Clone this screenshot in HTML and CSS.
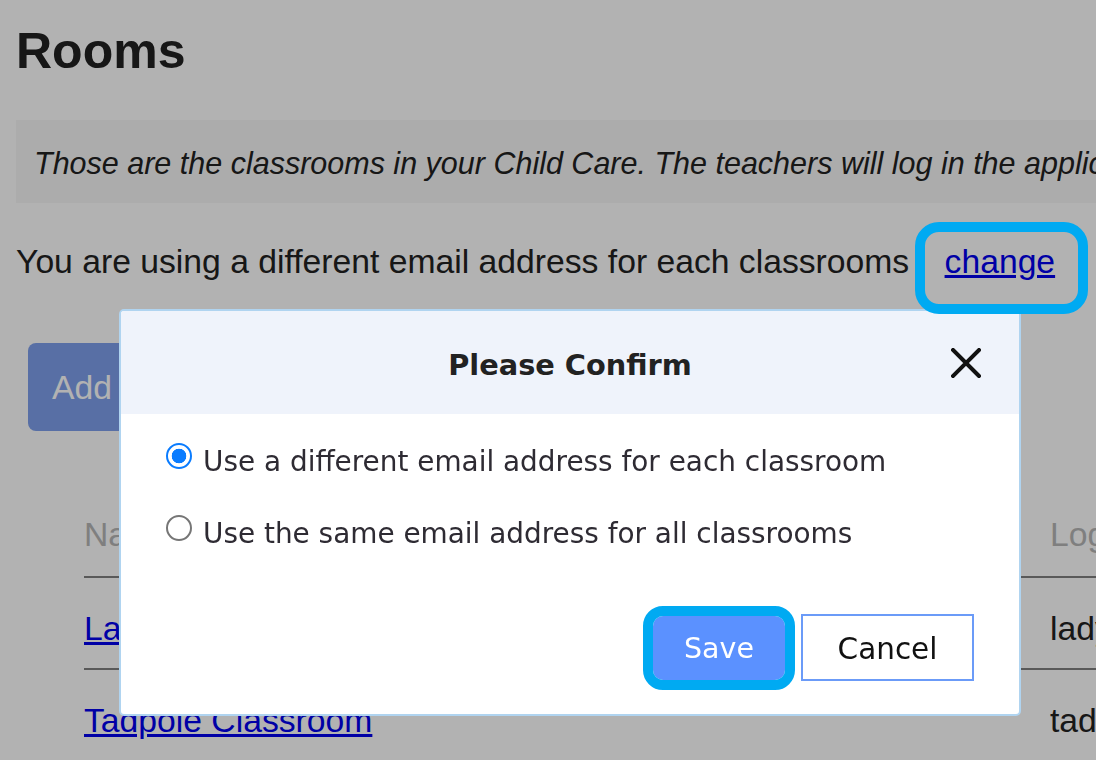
FILE: index.html
```html
<!DOCTYPE html>
<html lang="en">
<head>
<meta charset="utf-8">
<title>Rooms</title>
<link rel="stylesheet" href="styles.css">
</head>
<body>
<main class="page">
  <h1 class="title">Rooms</h1>
  <div class="info">Those are the classrooms in your Child Care. The teachers will log in the application using the email address of their classroom.</div>
  <p class="mode">You are using a different email address for each classrooms <a href="#" class="change">change</a></p>
  <button class="add">Add a Room</button>
  <div class="table">
    <div class="row head">
      <div class="cell">Name</div>
      <div class="cell">Login</div>
    </div>
    <div class="row">
      <div class="cell"><a href="#">Ladybug Classroom</a></div>
      <div class="cell">ladybug@childcare.com</div>
    </div>
    <div class="row last">
      <div class="cell"><a href="#">Tadpole Classroom</a></div>
      <div class="cell">tadpole@childcare.com</div>
    </div>
  </div>
</main>

<div class="overlay"></div>
<div class="ring ring-change"></div>

<div class="modal" role="dialog">
  <div class="modal-head">
    <h2 class="modal-title">Please Confirm</h2>
    <button class="close" aria-label="Close">
      <svg width="30" height="30" viewBox="0 0 30 30"><path d="M2 2 L28 28 M28 2 L2 28" stroke="#111" stroke-width="4" stroke-linecap="square" fill="none"/></svg>
    </button>
  </div>
  <div class="modal-body">
    <label class="option"><span class="radio checked"></span><span>Use a different email address for each classroom</span></label>
    <label class="option"><span class="radio"></span><span>Use the same email address for all classrooms</span></label>
  </div>
  <div class="modal-foot">
    <button class="btn save">Save</button>
    <button class="btn cancel">Cancel</button>
  </div>
</div>
</body>
</html>
```

FILE: styles.css
```css
html, body {
  margin: 0;
  padding: 0;
  overflow: hidden;
  width: 1096px;
  height: 760px;
  background: #fff;
}

.page {
  font-family: "Liberation Sans", Arial, sans-serif;
  font-size: 33.7px;
  line-height: 40px;
  color: #222;
  padding: 0 0 0 16px;
  width: 1300px;
}

.title {
  font-size: 50px;
  line-height: 60px;
  font-weight: bold;
  margin: 21px 0 0;
}

.info {
  margin-top: 39px;
  height: 83px;
  box-sizing: border-box;
  padding: 26px 18px 0;
  background: #f6f6f6;
  font-style: italic;
  font-size: 30.5px;
  line-height: 34px;
  white-space: nowrap;
  overflow: hidden;
  width: 1080px;
}

.mode {
  margin: 38px 0 0;
  white-space: nowrap;
}

.change {
  color: #0000ee;
  margin-left: 26px;
}

.add {
  display: block;
  margin: 62px 0 0 12px;
  height: 88px;
  padding: 0 24px;
  border: none;
  border-radius: 8px;
  background: #7ea0ec;
  color: #fff;
  font-family: "Liberation Sans", Arial, sans-serif;
  font-size: 33.7px;
}

.table {
  margin: 83px 0 0 68px;
}

.row {
  display: grid;
  grid-template-columns: 966px 300px;
  border-bottom: 2px solid #808080;
  padding: 30px 0 20px;
  white-space: nowrap;
}

.row.head {
  padding: 0 0 22px;
  color: #b7b7b7;
}

.row.last {
  border-bottom: none;
}

.row a {
  color: #0000ee;
}

.overlay {
  position: fixed;
  inset: 0;
  background: rgba(0, 0, 0, 0.3);
}

.ring {
  position: absolute;
  border: 10px solid #00aaf2;
  box-sizing: border-box;
  z-index: 5;
}

.ring-change {
  left: 915px;
  top: 222px;
  width: 173px;
  height: 92px;
  border-radius: 24px;
}

.modal {
  position: absolute;
  left: 119px;
  top: 309px;
  width: 902px;
  height: 407px;
  box-sizing: border-box;
  border: 2px solid #b0d4f0;
  border-radius: 5px;
  background: #fff;
  font-family: "DejaVu Sans", Verdana, sans-serif;
  color: #2e2b33;
  overflow: hidden;
  display: flex;
  flex-direction: column;
}

.modal-head {
  position: relative;
  height: 103px;
  flex: none;
  background: #eff3fb;
  display: flex;
  align-items: center;
  justify-content: center;
}

.modal-title {
  margin: 0;
  font-size: 28.8px;
  font-weight: bold;
  color: #222;
  padding-top: 4px;
}

.close {
  position: absolute;
  right: 38px;
  top: 37px;
  width: 30px;
  height: 30px;
  padding: 0;
  border: none;
  background: none;
  display: flex;
}

.modal-body {
  padding: 31px 0 0 45px;
  display: flex;
  flex-direction: column;
  gap: 38px;
  font-size: 27.9px;
  line-height: 34px;
}

.option {
  display: flex;
  align-items: flex-start;
  gap: 11px;
}

.radio {
  width: 26px;
  height: 26px;
  box-sizing: border-box;
  border-radius: 50%;
  border: 2px solid #767676;
  background: #fff;
  flex: none;
  margin-top: -2px;
}

.radio.checked {
  border: 2.5px solid #0a7cff;
  background: radial-gradient(circle, #0a7cff 0 7px, #fff 7.6px);
}

.modal-foot {
  margin-top: auto;
  padding: 0 45px 33px 0;
  display: flex;
  justify-content: flex-end;
  align-items: center;
  gap: 16px;
}

.btn {
  font-family: "DejaVu Sans", Verdana, sans-serif;
  height: 67px;
  box-sizing: border-box;
}

.save {
  width: 132px;
  height: 64px;
  border: none;
  border-radius: 10px;
  background: #5b91ff;
  color: #fff;
  font-size: 28.5px;
  padding-top: 3px;
  outline: 10px solid #00aaf2;
  outline-offset: 0;
}

.cancel {
  width: 173px;
  border: 2px solid #6b9bf8;
  background: #fff;
  color: #111;
  font-size: 29.5px;
  padding-top: 3px;
}
```
